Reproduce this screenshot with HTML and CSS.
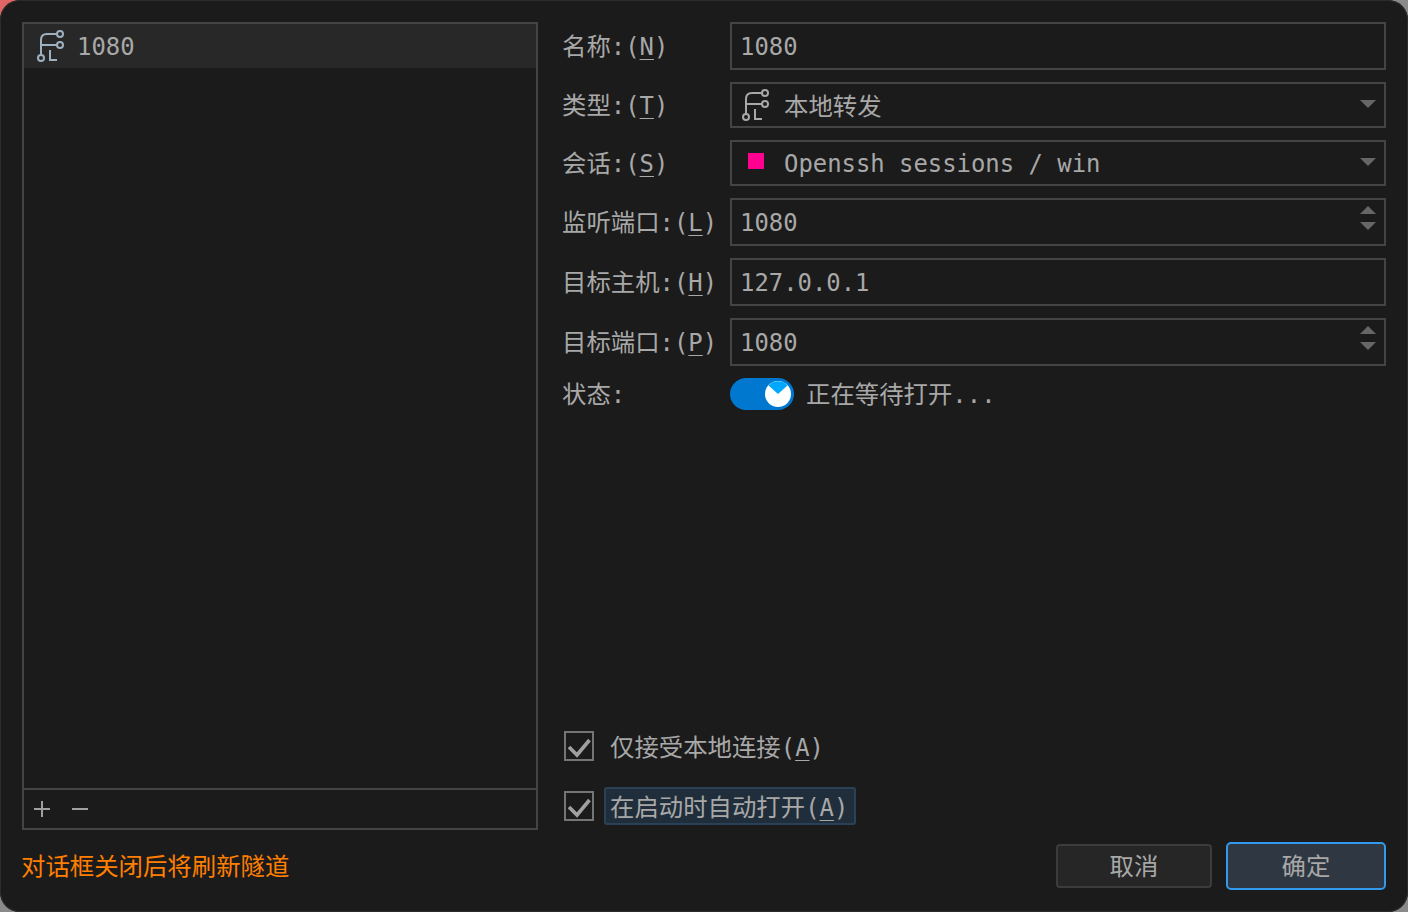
FILE: index.html
```html
<!DOCTYPE html>
<html lang="zh">
<head>
<meta charset="utf-8">
<title>隧道</title>
<link rel="stylesheet" href="styles.css">
</head>
<body>
<svg class="defs" width="0" height="0" aria-hidden="true">
  <symbol id="tunnel" viewBox="0 0 28 32">
    <g fill="none" stroke="currentColor" stroke-width="2">
      <circle cx="23" cy="4" r="3"/>
      <circle cx="23" cy="15" r="3"/>
      <circle cx="4" cy="28" r="3"/>
      <path d="M20 4H10Q4 4 4 10V25M4 15H20"/>
      <path d="M13 20V30H20"/>
    </g>
  </symbol>
</svg>
<div class="dialog">
  <div class="main">
    <div class="list-box">
      <div class="list">
        <div class="list-item"><svg class="icon icon-blue"><use href="#tunnel"/></svg><span class="mono">1080</span></div>
      </div>
      <div class="list-tools"><span class="tool plus"></span><span class="tool minus"></span></div>
    </div>
    <div class="form">
      <div class="row r1"><label class="lbl"><span class="c">名称</span>:(<u>N</u>)</label><div class="field"><span class="mono">1080</span></div></div>
      <div class="row r2"><label class="lbl"><span class="c">类型</span>:(<u>T</u>)</label><div class="field combo"><svg class="icon icon-grey"><use href="#tunnel"/></svg><span class="c">本地转发</span><i class="arrow down"></i></div></div>
      <div class="row r2"><label class="lbl"><span class="c">会话</span>:(<u>S</u>)</label><div class="field combo"><span class="swatch"></span><span class="mono">Openssh sessions / win</span><i class="arrow down"></i></div></div>
      <div class="row r3"><label class="lbl"><span class="c">监听端口</span>:(<u>L</u>)</label><div class="field spin"><span class="mono">1080</span><span class="spinner"><i class="arrow up"></i><i class="arrow down"></i></span></div></div>
      <div class="row r4"><label class="lbl"><span class="c">目标主机</span>:(<u>H</u>)</label><div class="field"><span class="mono">127.0.0.1</span></div></div>
      <div class="row r4"><label class="lbl"><span class="c">目标端口</span>:(<u>P</u>)</label><div class="field spin"><span class="mono">1080</span><span class="spinner"><i class="arrow up"></i><i class="arrow down"></i></span></div></div>
      <div class="row status"><label class="lbl"><span class="c">状态</span>:</label>
        <span class="switch"><svg class="knob" viewBox="0 0 26 26"><circle cx="13" cy="13" r="13" fill="#fff"/><path d="M13 13L3.5 4.5A13 13 0 0 1 22.5 4.5Z" fill="#00a8ff"/></svg></span>
        <span class="status-text"><span class="c">正在等待打开</span>...</span>
      </div>
      <div class="spacer"></div>
      <div class="check c1"><span class="box"><svg viewBox="0 0 26 26"><path d="M3 14l8 8L23.5 7" fill="none" stroke="#a0a0a0" stroke-width="3.6"/></svg></span><span class="check-text"><span class="c">仅接受本地连接</span>(<u>A</u>)</span></div>
      <div class="check c2"><span class="box"><svg viewBox="0 0 26 26"><path d="M3 14l8 8L23.5 7" fill="none" stroke="#a0a0a0" stroke-width="3.6"/></svg></span><span class="check-text focus"><span class="c">在启动时自动打开</span>(<u>A</u>)</span></div>
    </div>
  </div>
  <div class="footer">
    <span class="note c">对话框关闭后将刷新隧道</span>
    <div class="buttons"><button class="btn"><span class="c">取消</span></button><button class="btn primary"><span class="c">确定</span></button></div>
  </div>
</div>
</body>
</html>
```
FILE: styles.css
```css
* { box-sizing: border-box; }
html, body { margin: 0; height: 100%; }
html { background: linear-gradient(135deg, #e06666 0 2%, #8a8a8a 2%); }
body { overflow: hidden; font: 23.9px/30px "DejaVu Sans Mono", "Noto Sans CJK SC", monospace; color: #a8a8a8; }
.c { font-family: "Noto Sans CJK SC", sans-serif; font-size: 24.4px; }
.mono { padding-top: 2px; }
.defs { position: absolute; }
.dialog { width: 1408px; height: 912px; background: #1b1b1b; border-radius: 20px; padding: 22px; display: flex; flex-direction: column; box-shadow: inset 0 0 0 1px #2c2c2c; }
.main { display: flex; height: 808px; gap: 24px; }
.list-box { width: 516px; border: 2px solid #444; display: flex; flex-direction: column; }
.list { flex: 1; }
.list-item { height: 44px; background: #282828; display: flex; align-items: center; padding-left: 13px; gap: 12px; }
.list-tools { height: 40px; border-top: 2px solid #444; display: flex; align-items: center; padding-left: 10px; gap: 22px; }
.tool { position: relative; width: 16px; height: 16px; display: block; }
.tool::before { content: ""; position: absolute; left: 0; right: 0; top: 7px; height: 2px; background: #a0a0a0; }
.plus::after { content: ""; position: absolute; top: 0; bottom: 0; left: 7px; width: 2px; background: #a0a0a0; }
.icon { width: 28px; height: 32px; flex: none; }
.icon-blue { color: #9fb0bf; }
.icon-grey { color: #a8a8a8; }
.form { flex: 1; display: flex; flex-direction: column; }
.row { display: flex; align-items: center; }
.r1 { height: 48px; margin-bottom: 12px; }
.r2 { height: 46px; margin-bottom: 12px; }
.r3 { height: 48px; margin-bottom: 12px; }
.r4 { height: 48px; margin-bottom: 12px; }
.lbl { width: 168px; flex: none; white-space: nowrap; }
u { text-underline-offset: 4px; text-decoration-thickness: 1px; }
.field { flex: 1; height: 100%; border: 2px solid #444; display: flex; align-items: center; padding-left: 8px; position: relative; }
.combo { padding-left: 10px; gap: 14px; }
.swatch { width: 16px; height: 16px; background: #ff0090; margin: -4px 6px 0 6px; }
.arrow { display: block; width: 0; height: 0; border-left: 8px solid transparent; border-right: 8px solid transparent; }
.arrow.down { border-top: 8px solid #666; }
.arrow.up { border-bottom: 8px solid #666; }
.combo > .arrow { position: absolute; right: 8px; top: 16px; }
.spinner { position: absolute; right: 8px; top: 6px; display: flex; flex-direction: column; gap: 8px; }
.status { height: 36px; margin-top: -2px; }
.switch { width: 64px; height: 32px; border-radius: 16px; background: #0078d0; flex: none; display: flex; align-items: center; justify-content: flex-end; padding-right: 3px; }
.knob { width: 26px; height: 26px; display: block; }
.status-text { margin-left: 12px; }
.spacer { flex: 1; }
.check { display: flex; align-items: center; height: 38px; }
.c1 { margin-bottom: 22px; }
.c2 { margin-bottom: 5px; }
.box { width: 30px; height: 30px; border: 2px solid #757575; margin-left: 2px; flex: none; margin-right: 14px; display: block; }
.box svg { display: block; width: 26px; height: 26px; }
.check-text { height: 38px; line-height: 34px; border: 2px solid transparent; white-space: nowrap; }
.focus { background: #202e3b; border-color: #2a4258; border-radius: 3px; margin-left: -4px; padding: 0 6px 0 4px; }
.footer { display: flex; justify-content: space-between; align-items: center; height: 48px; margin-top: 12px; }
.note { color: #ff7f00; margin-left: -1px; padding-bottom: 2px; }
.buttons { display: flex; gap: 14px; align-items: center; }
.btn { width: 156px; height: 44px; border: 2px solid #3c3c3c; border-radius: 4px; background: #262626; color: #a8a8a8; font: inherit; padding: 0; }
.primary { width: 160px; height: 48px; background: #2e3742; border-color: #3399ea; border-radius: 5px; }
```
